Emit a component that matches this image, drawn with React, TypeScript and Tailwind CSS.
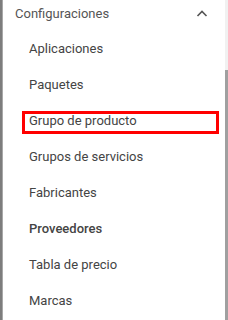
import React from "react";

const items = [
  "Aplicaciones",
  "Paquetes",
  "Grupo de producto",
  "Grupos de servicios",
  "Fabricantes",
  "Proveedores",
  "Tabla de precio",
  "Marcas",
];

export default function App() {
  return (
    <div
      className="w-[228px] h-[320px] flex bg-white overflow-hidden"
      style={{ fontFamily: "Roboto, 'Liberation Sans', sans-serif" }}
    >
      <div className="w-[3px] shrink-0 bg-[#7d7d7d] border-r border-[#a8a8a8]" />
      <div className="flex-1 flex flex-col">
        <div className="h-[30px] pt-[4px] pl-[12px] pr-[17px] flex items-start justify-between">
          <span className="text-[13px] leading-[20px] text-[#555555]">Configuraciones</span>
          <svg width="12" height="12" viewBox="0 0 12 12" className="mt-[4px]">
            <path d="M1.5 8 L6 3.5 L10.5 8" fill="none" stroke="#555" strokeWidth="1.6" />
          </svg>
        </div>
        {items.map((it) => (
          <div key={it} className="relative h-[36px] flex items-center pl-[26px] pt-[1px]">
            <span
              className={
                "text-[13px] leading-[20px] text-[#444444] " +
                (it === "Proveedores" ? "font-medium" : "")
              }
            >
              {it}
            </span>
            {it === "Grupo de producto" && (
              <div className="absolute left-[19px] top-[9px] w-[197px] h-[23px] border-[3px] border-[#ff0000]" />
            )}
          </div>
        ))}
      </div>
      <div className="w-[3px] shrink-0 bg-[#f1f1f1] flex flex-col">
        <div className="h-[70px]" />
        <div className="flex-1 bg-[#a0a0a0]" />
      </div>
    </div>
  );
}
